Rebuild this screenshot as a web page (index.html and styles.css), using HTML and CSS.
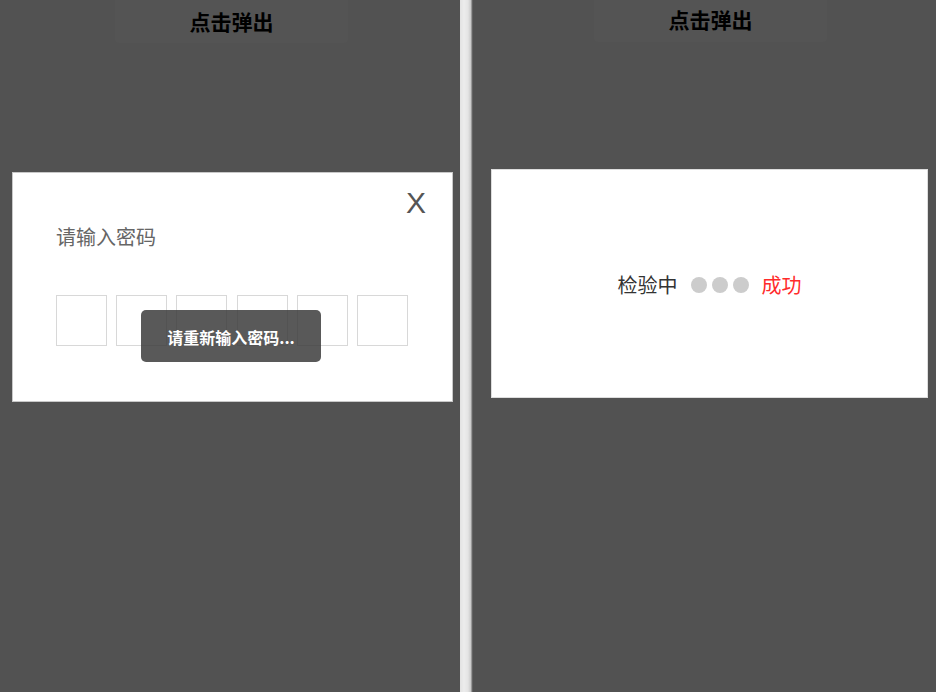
FILE: index.html
```html
<!DOCTYPE html>
<html lang="zh">
<head>
<meta charset="utf-8">
<link rel="stylesheet" href="styles.css">
</head>
<body>
<div class="screen">
  <section class="phone phone-left">
    <div class="trigger trigger-left">点击弹出</div>
    <div class="modal modal-left">
      <div class="close">X</div>
      <div class="prompt">请输入密码</div>
      <div class="boxes">
        <span class="box"></span><span class="box"></span><span class="box"></span><span class="box"></span><span class="box"></span><span class="box"></span>
      </div>
      <div class="toast">请重新输入密码...</div>
    </div>
  </section>
  <div class="divider"></div>
  <section class="phone phone-right">
    <div class="trigger trigger-right">点击弹出</div>
    <div class="modal modal-right">
      <div class="status">
        <span class="label">检验中</span>
        <span class="dots"><i class="dot"></i><i class="dot"></i><i class="dot"></i></span>
        <span class="ok">成功</span>
      </div>
    </div>
  </section>
</div>
</body>
</html>
```
FILE: styles.css
```css
* { box-sizing: border-box; }
html, body { margin: 0; padding: 0; }
body {
  width: 936px;
  height: 692px;
  overflow: hidden;
  background: #525252;
  font-family: "Noto Sans CJK SC", "Noto Sans", sans-serif;
}
.screen {
  display: flex;
  height: 692px;
}
.phone {
  position: relative;
  display: flex;
  flex-direction: column;
  height: 100%;
}
.phone-left { width: 460px; }
.phone-right { flex: 1; }
.divider {
  width: 13px;
  height: 100%;
  background: linear-gradient(to right, #e2e2e2 0, #ececec 4px, #e4e4e4 8px, #c8c8c8 11px, #6a6a6a 12px, #5a5a5a 13px);
}
.trigger {
  width: 233px;
  height: 43px;
  background: #545454;
  border-radius: 0 0 4px 4px;
  color: #000;
  font-weight: bold;
  font-size: 21px;
  line-height: 43px;
  text-align: center;
}
.trigger-left { margin-left: 115px; line-height: 43px; }
.trigger-right { margin-left: 121px; line-height: 39px; height: 42px; }

.modal {
  position: relative;
  background: #fff;
  border: 1px solid #c8c8c8;
}
.modal-left {
  margin-top: 129px;
  margin-left: 12px;
  width: 441px;
  height: 230px;
  padding: 20px 0 0 43px;
}
.close {
  position: absolute;
  right: 26px;
  top: 13px;
  font-family: "Liberation Sans", Arial, sans-serif;
  font-size: 30px;
  line-height: 34px;
  color: #555;
}
.prompt {
  margin-top: 32px;
  font-size: 20px;
  line-height: 24px;
  color: #666;
}
.boxes {
  display: flex;
  gap: 9.2px;
  margin-top: 46px;
}
.box {
  width: 51px;
  height: 51px;
  border: 1px solid #d8d8d8;
  background: #fff;
}
.toast {
  position: absolute;
  left: 128px;
  top: 137px;
  width: 180px;
  height: 52px;
  border-radius: 5px;
  background: rgba(60, 60, 60, 0.85);
  color: #fff;
  font-size: 16px;
  font-weight: bold;
  line-height: 54px;
  text-align: center;
}
.modal-right {
  margin-top: 127px;
  margin-left: 18px;
  width: 437px;
  height: 229px;
  display: flex;
  align-items: center;
  justify-content: center;
  border-color: #ddd;
}
.status {
  display: flex;
  align-items: center;
  font-size: 20px;
  line-height: 24px;
  margin-top: 2px;
}
.label { color: #333; }
.dots {
  display: flex;
  gap: 5px;
  margin: 0 13px 0 13px;
}
.dot {
  width: 16px;
  height: 16px;
  border-radius: 50%;
  background: #cccccc;
}
.ok { color: #ff2b2b; }
```
